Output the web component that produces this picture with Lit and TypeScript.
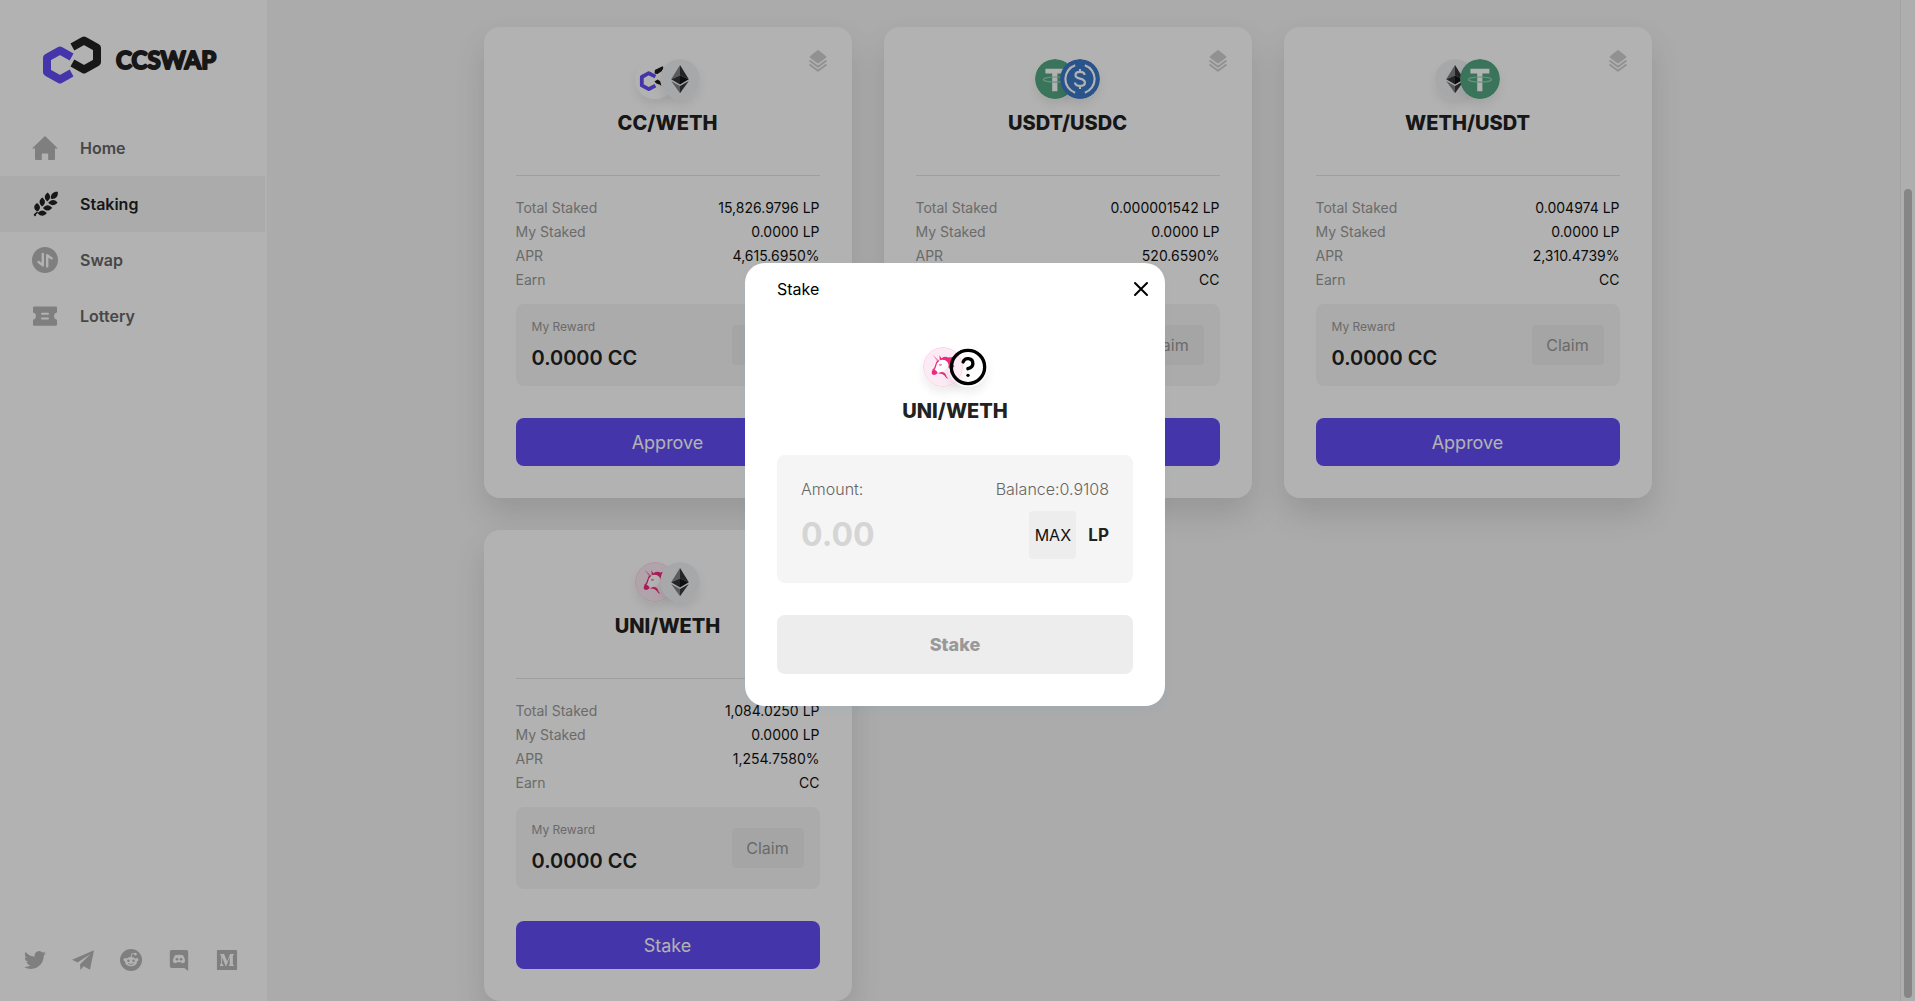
import { LitElement, html, svg, css } from "lit";
import { customElement, property } from "lit/decorators.js";

interface Pool {
  pair: string;
  tokens: [string, string];
  staked: string;
  apr: string;
  action: string;
}

const POOLS: Pool[] = [
  { pair: "CC/WETH", tokens: ["cc", "eth"], staked: "15,826.9796 LP", apr: "4,615.6950%", action: "Approve" },
  { pair: "USDT/USDC", tokens: ["usdt", "usdc"], staked: "0.000001542 LP", apr: "520.6590%", action: "Approve" },
  { pair: "WETH/USDT", tokens: ["eth", "usdt"], staked: "0.004974 LP", apr: "2,310.4739%", action: "Approve" },
  { pair: "UNI/WETH", tokens: ["uni", "eth"], staked: "1,084.0250 LP", apr: "1,254.7580%", action: "Stake" },
];

const TOKEN_ART: Record<string, unknown> = {
  cc: svg`<circle cx="20" cy="20" r="20" fill="#fff"/>
    <path d="M20.4 14 L20.6 11.4 L27.4 8.2 L27.8 10.6 L22.4 14.2 Z" fill="#1c1c1c" stroke="#1c1c1c" stroke-width="1.6" stroke-linejoin="round"/>
    <path d="M19.4 22.4 L22.6 20.6 L25.6 22.6 L27.4 27.6 L24.4 25.4 L21.4 24.6 Z" fill="#1c1c1c"/>
    <path d="M20.4 17.6 L13.8 14.2 L6.8 18 V26.4 L13.8 30.2 L20.4 26.6" fill="none" stroke="#624cf5" stroke-width="3.8" stroke-linejoin="round"/>`,
  eth: svg`<circle cx="20" cy="20" r="20" fill="#eef1f4"/>
    <path d="M20 6 L11.2 20.3 L20 16.5 Z" fill="#828384"/>
    <path d="M20 6 L28.8 20.3 L20 16.5 Z" fill="#343434"/>
    <path d="M11.2 20.3 L20 16.5 V25.4 Z" fill="#343434"/>
    <path d="M28.8 20.3 L20 16.5 V25.4 Z" fill="#131313"/>
    <path d="M11.2 22 L20 27.1 V34.2 Z" fill="#828384"/>
    <path d="M28.8 22 L20 27.1 V34.2 Z" fill="#393939"/>`,
  usdt: svg`<circle cx="20" cy="20" r="20" fill="#53a783"/>
    <path d="M10.4 9.8 H29.4 V14.6 H22.4 V32.2 H17.2 V14.6 H10.4 Z" fill="#fff"/>
    <ellipse cx="20" cy="20.6" rx="11.6" ry="2.6" fill="none" stroke="#9ccfb9" stroke-width="1.2"/>`,
  usdc: svg`<circle cx="20" cy="20" r="20" fill="#3c78c8"/>
    <path d="M15.2 6.2 A14.6 14.6 0 0 0 15.2 33.8 M24.8 6.2 A14.6 14.6 0 0 1 24.8 33.8" fill="none" stroke="#fff" stroke-width="2.2"/>
    <path d="M24.6 16 C24.4 13.8 22.6 12.9 20 12.9 C17.4 12.9 15.5 14.1 15.5 16.2 C15.5 20.9 24.9 18.2 24.9 23.4 C24.9 25.6 22.8 26.9 20 26.9 C17.2 26.9 15.2 25.8 15 23.5 M20 10 V13 M20 27 V30" fill="none" stroke="#fff" stroke-width="2.2"/>`,
  uni: svg`<circle cx="20" cy="20" r="19.5" fill="#fcebf4" stroke="#fad3e6"/>
    <path d="M9.3 7.6 L16.2 13.6 L14.6 15 Z" fill="#f58fbd"/>
    <path d="M16.4 8.2 L18.4 11.2 Q22 9 25 10.4 L30 10 L28.6 12.4 Q31 15 30.4 17.4 L31.4 20 L29.6 20.6 Q30.4 24 27.4 26.4 Q28.2 22.4 25.4 20.6 Q26.6 16 22.4 13.6 Q19.4 12.4 16.8 13.8 Z" fill="#ee2a7e"/>
    <path d="M16.6 13.4 Q21 11.8 24 15 Q26 18.4 23.6 21.6 Q21.4 24.4 17.8 24.2 L14 26 L11.4 22.6 L13.4 18.6 Z" fill="#fff"/>
    <path d="M15.6 13.6 Q12.8 15.4 12.6 18.8 Q12.2 21.6 9.6 23.4" fill="none" stroke="#ee2a7e" stroke-width="1.3"/>
    <path d="M9.4 23.4 Q11.4 21.8 13.2 23.8 Q15.4 25.2 14.2 26.6 Q12.4 28.4 10 27.8 Q7.6 26.4 9.4 23.4Z" fill="#ee2a7e"/>
    <ellipse cx="17.4" cy="17.8" rx="1.6" ry="1.1" fill="#f486b8"/>
    <path d="M15 26.6 Q18.4 23.6 22 26.2 Q23.4 28 23.6 29.8 L25.4 31.8 Q22.4 31 21.4 28.6 Q19.6 26.4 15 26.6Z" fill="#ee2a7e"/>`,
  unknown: svg`<g transform="scale(1.6667)" fill="none" stroke="#000" stroke-width="2" stroke-linecap="round" stroke-linejoin="round">
      <circle cx="12" cy="12" r="10"/>
      <path d="M9.09 9a3 3 0 0 1 5.83 1c0 2-3 3-3 3"/>
      <path d="M12 17h.01"/></g>`,
};

const NAV = [
  { label: "Home", active: false, art: svg`<path d="M13 1 L26 13.6 H23 V24 Q23 25 22 25 H16.2 V19.6 Q16.2 18.6 15.2 18.6 H10.8 Q9.8 18.6 9.8 19.6 V25 H4 Q3 25 3 24 V13.6 H0 Z"/>` },
  {
    label: "Staking", active: true, art: svg`<path d="M1.6 23.6 L5 20.4 L6 21.4 L3.8 23.8 L4 25 L2.6 25.2 Z"/>
      <path d="M5 12 C8.8 14.6 9 18 5.2 20.6 C1.2 18 1.4 14.4 5 12Z M10.2 6.6 C13.8 9.4 14 12.6 10 15.6 C6.6 12.4 6.8 9.4 10.2 6.6Z M15.6 1.4 C19 4.4 19 7.6 15.2 10.6 C11.8 7.4 12 4.4 15.6 1.4Z M25.8 .8 C26.4 5.6 23.6 8.6 18.8 7.8 C18.6 2.8 21.4 .4 25.8 .8Z M25.6 11.4 C22.6 15 19.4 15 16.2 11.8 C19 8.2 22.4 7.8 25.6 11.4Z M20.2 16.8 C17.4 20.4 14.2 20.6 11 17 C14 13.4 17.2 13.4 20.2 16.8Z M14.8 22 C12 25.6 8.8 25.6 5.6 22.2 C8.6 18.6 11.8 18.6 14.8 22Z"/>` },
  {
    label: "Swap", active: false, art: svg`<circle cx="13" cy="13" r="13"/>
      <path class="cut" d="M10.8 7 V18.4 L6.6 15 M15.2 19.4 V8.2 L19.6 11.4"/>` },
  {
    label: "Lottery", active: false, art: svg`<path d="M2 3.4 H24 Q25 3.4 25 4.4 V9.4 A3.8 3.8 0 0 0 25 16.8 V21.8 Q25 22.8 24 22.8 H2 Q1 22.8 1 21.8 V16.8 A3.8 3.8 0 0 0 1 9.4 V4.4 Q1 3.4 2 3.4Z"/>
      <path class="cut thin" d="M10 10.8 H16 M10 15.4 H16"/>` },
];

const SOCIALS = [
  { name: "Twitter", art: svg`<path d="M23.953 4.57a10 10 0 01-2.825.775 4.958 4.958 0 002.163-2.723c-.951.555-2.005.959-3.127 1.184a4.92 4.92 0 00-8.384 4.482C7.69 8.095 4.067 6.13 1.64 3.162a4.822 4.822 0 00-.666 2.475c0 1.71.87 3.213 2.188 4.096a4.904 4.904 0 01-2.228-.616v.06a4.923 4.923 0 003.946 4.827 4.996 4.996 0 01-2.212.085 4.936 4.936 0 004.604 3.417 9.867 9.867 0 01-6.102 2.105c-.39 0-.779-.023-1.17-.067a13.995 13.995 0 007.557 2.209c9.053 0 13.998-7.496 13.998-13.985 0-.21 0-.42-.015-.63A9.935 9.935 0 0024 4.59z"/>` },
  { name: "Telegram", art: svg`<path d="M0 11.6 L24 1.4 L19.6 22.6 L12.6 18.8 L9.2 22.8 L8.8 16.6 L20.2 5.4 L6 14.6 Z"/>` },
  {
    name: "Reddit", art: svg`<circle cx="12" cy="12" r="12"/>
      <g class="light"><ellipse cx="12" cy="13.8" rx="6.6" ry="5"/><circle cx="5.6" cy="11.6" r="1.8"/><circle cx="18.4" cy="11.6" r="1.8"/><circle cx="16.8" cy="5.6" r="1.4"/></g>
      <path class="line" d="M12 9 L13 4.9 L16.6 5.6"/>
      <circle cx="9.2" cy="12.8" r="1.3"/><circle cx="14.8" cy="12.8" r="1.3"/>
      <path class="mouth" d="M9 16 Q12 17.8 15 16"/>` },
  {
    name: "Discord", art: svg`<path d="M4 1 H20 Q22 1 22 3 V24 L17.8 20.6 H4 Q2 20.6 2 18.8 V3 Q2 1 4 1Z"/>
      <path class="light" d="M7.6 6.8 Q12 5.6 16.4 6.8 Q18.8 10.4 18.6 14.2 Q17 15.6 15 15.6 L14.2 14.2 Q12 14.8 9.8 14.2 L9 15.6 Q7 15.6 5.4 14.2 Q5.2 10.4 7.6 6.8Z"/>
      <circle cx="9.8" cy="11.2" r="1.4"/><circle cx="14.2" cy="11.2" r="1.4"/>` },
  {
    name: "Medium", art: svg`<rect x="1" y="1" width="22" height="22" rx="1"/>
      <path class="light" d="M4.4 5.4 H8.8 L12.2 13.6 L15.4 5.4 H19.6 V6 L18.4 7.2 V16.8 L19.6 18 V18.6 H13.8 V18 L15 16.8 V8.6 L11.2 18.6 H10.6 L6.6 9 V15.6 L8.2 18 V18.6 H4.2 V18 L5.6 15.6 V7.4 L4.4 6 Z"/>` },
];

@customElement("token-pair")
class TokenPair extends LitElement {
  @property({ attribute: false }) tokens: string[] = [];

  static styles = css`
    :host { display: flex; justify-content: center; }
    .token { width: 40px; height: 40px; border-radius: 50%; box-shadow: 0 6px 10px rgba(0, 0, 0, 0.075); }
    .token + .token { margin-left: -15px; }
  `;

  render() {
    return this.tokens.map((t) => html`<svg class="token" viewBox="0 0 40 40" aria-hidden="true">${TOKEN_ART[t]}</svg>`);
  }
}

@customElement("pool-card")
class PoolCard extends LitElement {
  @property({ attribute: false }) pool!: Pool;

  static styles = css`
    :host {
      display: block; position: relative; box-sizing: border-box; padding: 32px;
      background: #fff; border-radius: 16px; box-shadow: 0 16px 32px rgba(0, 0, 0, 0.12);
    }
    .layers { position: absolute; top: 23px; right: 25px; width: 18px; height: 22px; fill: #d0d0d0; }
    .layers .under { fill: none; stroke: #d0d0d0; stroke-width: 2; stroke-linecap: round; stroke-linejoin: round; }
    h2 { margin: 12px 0 0; font-size: 20px; line-height: 24px; font-weight: 800; text-align: center; color: #222; }
    dl { margin: 40px 0 0; padding: 20px 0 0; border-top: 1px solid #e2e2e2; font-size: 14px; line-height: 24px; }
    .row { display: flex; justify-content: space-between; }
    dt { color: #999; }
    dd { margin: 0; color: #111; }
    .reward {
      display: flex; align-items: center; justify-content: space-between; box-sizing: border-box;
      height: 82px; margin-top: 12px; padding: 0 16px; border-radius: 8px; background: #f5f5f5;
    }
    .caption { margin: 2px 0 8px; font-size: 12px; line-height: 16px; color: #999; }
    .value { margin: 0; font-size: 20px; line-height: 30px; font-weight: 600; color: #222; }
    button { border: 0; font-family: inherit; cursor: pointer; }
    .claim { width: 72px; height: 40px; padding: 0; border-radius: 4px; background: #ededed; font-size: 16px; color: #999; }
    .action { display: block; width: 100%; height: 48px; margin-top: 32px; border-radius: 8px; background: #624cf5; font-size: 18px; color: #fff; }
  `;

  render() {
    const p = this.pool;
    return html`
      <svg class="layers" viewBox="0 0 18 22" aria-hidden="true">
        <path d="M8 .6 Q9 -.2 10 .6 L17 6.2 Q18 7 17 7.8 L10 12.9 Q9 13.6 8 12.9 L1 7.8 Q0 7 1 6.2Z"/>
        <path class="under" d="M1.2 11 L9 16.8 L16.8 11 M1.2 15 L9 20.8 L16.8 15"/>
      </svg>
      <token-pair .tokens=${p.tokens}></token-pair>
      <h2>${p.pair}</h2>
      <dl>
        <div class="row"><dt>Total Staked</dt><dd>${p.staked}</dd></div>
        <div class="row"><dt>My Staked</dt><dd>0.0000 LP</dd></div>
        <div class="row"><dt>APR</dt><dd>${p.apr}</dd></div>
        <div class="row"><dt>Earn</dt><dd>CC</dd></div>
      </dl>
      <div class="reward">
        <div>
          <p class="caption">My Reward</p>
          <p class="value">0.0000 CC</p>
        </div>
        <button class="claim" type="button">Claim</button>
      </div>
      <button class="action" type="button">${p.action}</button>
    `;
  }
}

@customElement("side-bar")
class SideBar extends LitElement {
  static styles = css`
    :host { display: flex; flex-direction: column; background: #fff; }
    .brand { display: block; width: 176px; height: 48px; margin: 36px 0 36px 43px; }
    .brand svg { display: block; width: 100%; height: 100%; }
    .word { font: 700 24px Lato, sans-serif; fill: #222; stroke: #222; stroke-width: 2; stroke-linejoin: round; }
    nav { display: flex; flex-direction: column; margin-right: 2px; }
    .item {
      display: flex; align-items: center; gap: 22px; height: 56px; padding-left: 32px;
      font-size: 16px; font-weight: 600; color: #666; text-decoration: none;
    }
    .item svg { width: 26px; height: 26px; fill: #b7b7b7; }
    .item .cut { fill: none; stroke: #fff; stroke-width: 2.4; stroke-linecap: round; stroke-linejoin: round; }
    .item .thin { stroke-width: 2; }
    .active { background: #f5f5f5; color: #222; }
    .active svg { fill: #222; }
    .socials { display: flex; justify-content: space-between; margin: auto 29px 30px 24px; }
    .socials a { display: block; height: 22px; }
    .socials svg { display: block; width: 22px; height: 22px; fill: #b7b7b7; }
    .socials .light { fill: #fff; }
    .line { fill: none; stroke: #fff; stroke-width: 1; }
    .mouth { fill: none; stroke: #b7b7b7; stroke-width: 1; }
  `;

  render() {
    return html`
      <a class="brand" href="#" aria-label="CCSWAP">
        <svg viewBox="0 0 176 48">
          <g fill="none" stroke-width="8" stroke-linejoin="round">
            <path d="M28.6 20.9 L17 14.6 L4 21.7 V36.3 L17 43.4 L28.6 37.1" stroke="#624cf5"/>
            <path d="M29.4 10.9 L41 4.6 L54 11.7 V26.3 L41 33.4 L29.4 27.1" stroke="#222"/>
          </g>
          <text class="word" x="73" y="33">CCSWAP</text>
        </svg>
      </a>
      <nav>
        ${NAV.map((n) => html`
          <a class="item ${n.active ? "active" : ""}" href="#"><svg viewBox="0 0 26 26" aria-hidden="true">${n.art}</svg>${n.label}</a>`)}
      </nav>
      <div class="socials">
        ${SOCIALS.map((s) => html`<a href="#" aria-label=${s.name}><svg viewBox="0 0 24 24">${s.art}</svg></a>`)}
      </div>
    `;
  }
}

@customElement("stake-dialog")
class StakeDialog extends LitElement {
  static styles = css`
    :host { display: flex; align-items: center; justify-content: center; box-sizing: border-box; padding: 0 5px 32px 0; background: rgba(0, 0, 0, 0.3); }
    .dialog { box-sizing: border-box; width: 420px; padding: 16px 32px 32px; background: #fff; border-radius: 20px; box-shadow: 0 4px 8px rgba(47, 128, 237, 0.05); }
    header { display: flex; align-items: center; justify-content: space-between; height: 20px; margin-right: -16px; font-size: 16px; }
    h1 { margin: 0; font-size: 16px; line-height: 20px; font-weight: 400; color: #000; }
    button { border: 0; padding: 0; font-family: inherit; cursor: pointer; }
    .close { width: 16px; height: 16px; background: none; }
    .close svg { display: block; width: 16px; height: 16px; stroke: #000; stroke-width: 2; stroke-linecap: round; }
    token-pair { margin-top: 48px; }
    h2 { margin: 12px 0 32px; font-size: 20px; line-height: 24px; font-weight: 800; text-align: center; color: #222; }
    .panel { padding: 24px; background: #f5f5f5; border-radius: 8px; }
    .line { display: flex; justify-content: space-between; font-size: 16px; line-height: 20px; font-weight: 300; color: #666; }
    .entry { display: flex; align-items: center; margin-top: 12px; height: 48px; }
    input { flex: 1; min-width: 0; padding: 0; border: 0; outline: 0; background: none; font-family: inherit; font-size: 32px; line-height: 40px; font-weight: 700; color: #222; }
    input::placeholder { color: #d5d5d5; opacity: 1; }
    .max { width: 47px; height: 48px; border-radius: 4px; background: #ededed; font-size: 16px; color: #111; }
    .unit { margin-left: 12px; font-size: 17px; font-weight: 700; color: #222; }
    .submit { display: block; width: 100%; height: 59px; margin-top: 32px; border-radius: 8px; background: #ededed; font-size: 18px; font-weight: 800; color: #999; }
  `;

  render() {
    return html`
      <section class="dialog" role="dialog" aria-labelledby="title">
        <header>
          <h1 id="title">Stake</h1>
          <button class="close" type="button" aria-label="Close"><svg viewBox="0 0 16 16"><path d="M2 2 L14 14 M14 2 L2 14"/></svg></button>
        </header>
        <token-pair .tokens=${["uni", "unknown"]}></token-pair>
        <h2>UNI/WETH</h2>
        <div class="panel">
          <div class="line"><label for="amount">Amount:</label><span>Balance:0.9108</span></div>
          <div class="entry">
            <input id="amount" type="text" inputmode="decimal" placeholder="0.00">
            <button class="max" type="button">MAX</button>
            <span class="unit">LP</span>
          </div>
        </div>
        <button class="submit" type="button">Stake</button>
      </section>
    `;
  }
}

@customElement("app-root")
class AppRoot extends LitElement {
  static styles = css`
    :host { display: block; position: relative; height: 100vh; overflow: hidden; font-family: Inter, "Liberation Sans", sans-serif; }
    .page { display: grid; grid-template-columns: 267px minmax(0, 1fr) 15px; height: 100%; background: #f5f5f5; }
    main { overflow: hidden; padding-top: 27px; }
    .pools { display: grid; grid-template-columns: repeat(auto-fill, 368px); gap: 32px; max-width: 1200px; margin: 0 auto; }
    .track { box-sizing: border-box; padding: 189px 3px 3px; background: #fafafa; border-left: 1px solid #e8e8e8; }
    .thumb { height: 100%; border-radius: 4px; background: #c1c1c1; }
    stake-dialog { position: absolute; inset: 0; }
  `;

  render() {
    return html`
      <div class="page">
        <side-bar></side-bar>
        <main>
          <div class="pools">${POOLS.map((p) => html`<pool-card .pool=${p}></pool-card>`)}</div>
        </main>
        <div class="track" aria-hidden="true"><div class="thumb"></div></div>
      </div>
      <stake-dialog></stake-dialog>
    `;
  }
}
